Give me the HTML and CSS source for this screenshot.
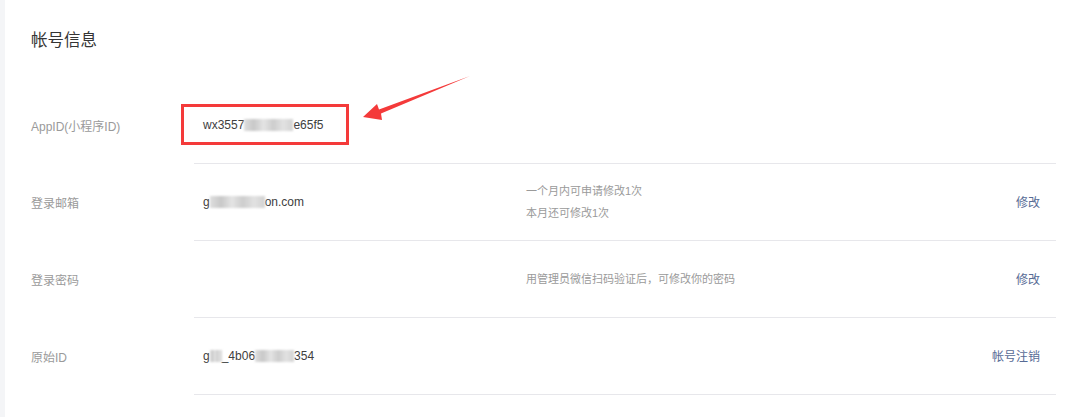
FILE: index.html
```html
<!DOCTYPE html>
<html lang="zh-CN">
<head>
<meta charset="utf-8">
<title>帐号信息</title>
<link rel="stylesheet" href="styles.css">
</head>
<body>
<div class="card">
  <h2 class="title">帐号信息</h2>
  <div class="rows">
    <div class="row">
      <div class="label">AppID(小程序ID)</div>
      <div class="main">
        <div class="value">wx3557<span class="mask m1"></span>e65f5</div>
        <div class="desc"></div>
        <div class="action"></div>
      </div>
    </div>
    <div class="row">
      <div class="label">登录邮箱</div>
      <div class="main">
        <div class="value">g<span class="mask m2"></span>on.com</div>
        <div class="desc"><p>一个月内可申请修改1次</p><p>本月还可修改1次</p></div>
        <div class="action"><a href="#">修改</a></div>
      </div>
    </div>
    <div class="row">
      <div class="label">登录密码</div>
      <div class="main">
        <div class="value"></div>
        <div class="desc"><p>用管理员微信扫码验证后，可修改你的密码</p></div>
        <div class="action"><a href="#">修改</a></div>
      </div>
    </div>
    <div class="row">
      <div class="label">原始ID</div>
      <div class="main">
        <div class="value">g<span class="mask m3"></span>_4b06<span class="mask m4"></span>354</div>
        <div class="desc"></div>
        <div class="action"><a href="#">帐号注销</a></div>
      </div>
    </div>
  </div>
  <div class="highlight"></div>
  <svg class="arrow" width="120" height="55" viewBox="0 0 120 55">
    <polygon points="8,47 22,34 24,39.5 115,6 26,43.5 27,50" fill="#f43a3a"/>
  </svg>
</div>
</body>
</html>
```

FILE: styles.css
```css
html, body {
  margin: 0;
  padding: 0;
}
body {
  background: #f4f5f7;
  font-family: "Liberation Sans", "Noto Sans CJK SC", sans-serif;
  height: 417px;
  overflow: hidden;
}
.card {
  position: relative;
  margin-left: 5px;
  background: #fff;
  height: 417px;
  padding: 28px 10px 0 26px;
  box-sizing: border-box;
}
.title {
  margin: 0 0 35px;
  font-size: 16.5px;
  line-height: 24px;
  font-weight: normal;
  color: #353535;
}
.row {
  display: grid;
  grid-template-columns: 163px 1fr;
  height: 77px;
}
.label {
  display: flex;
  align-items: center;
  font-size: 12px;
  color: #9a9a9a;
}
.main {
  display: flex;
  align-items: center;
  border-bottom: 1px solid #e7e7eb;
  padding: 0 16px 0 9px;
}
.value {
  width: 323px;
  font-size: 12px;
  color: #404040;
  display: flex;
  align-items: center;
}
.desc {
  flex: 1;
  font-size: 11px;
  color: #9a9a9a;
}
.desc p {
  margin: 0;
  line-height: 22px;
}
.action a {
  font-size: 12px;
  color: #576b95;
  text-decoration: none;
}
.mask {
  display: inline-block;
  height: 12px;
  background: linear-gradient(90deg, #dedede 0%, #c8c8c8 20%, #e4e4e4 40%, #cdcdcd 60%, #e2e2e2 80%, #d2d2d2 100%);
  filter: blur(1px);
}
.m1 { width: 49px; }
.m2 { width: 55px; }
.m3 { width: 12px; }
.m4 { width: 39px; }
.highlight {
  position: absolute;
  left: 176px;
  top: 104px;
  width: 168px;
  height: 41px;
  border: 3px solid #f43a3a;
  box-sizing: border-box;
}
.arrow {
  position: absolute;
  left: 350px;
  top: 70px;
}
```
